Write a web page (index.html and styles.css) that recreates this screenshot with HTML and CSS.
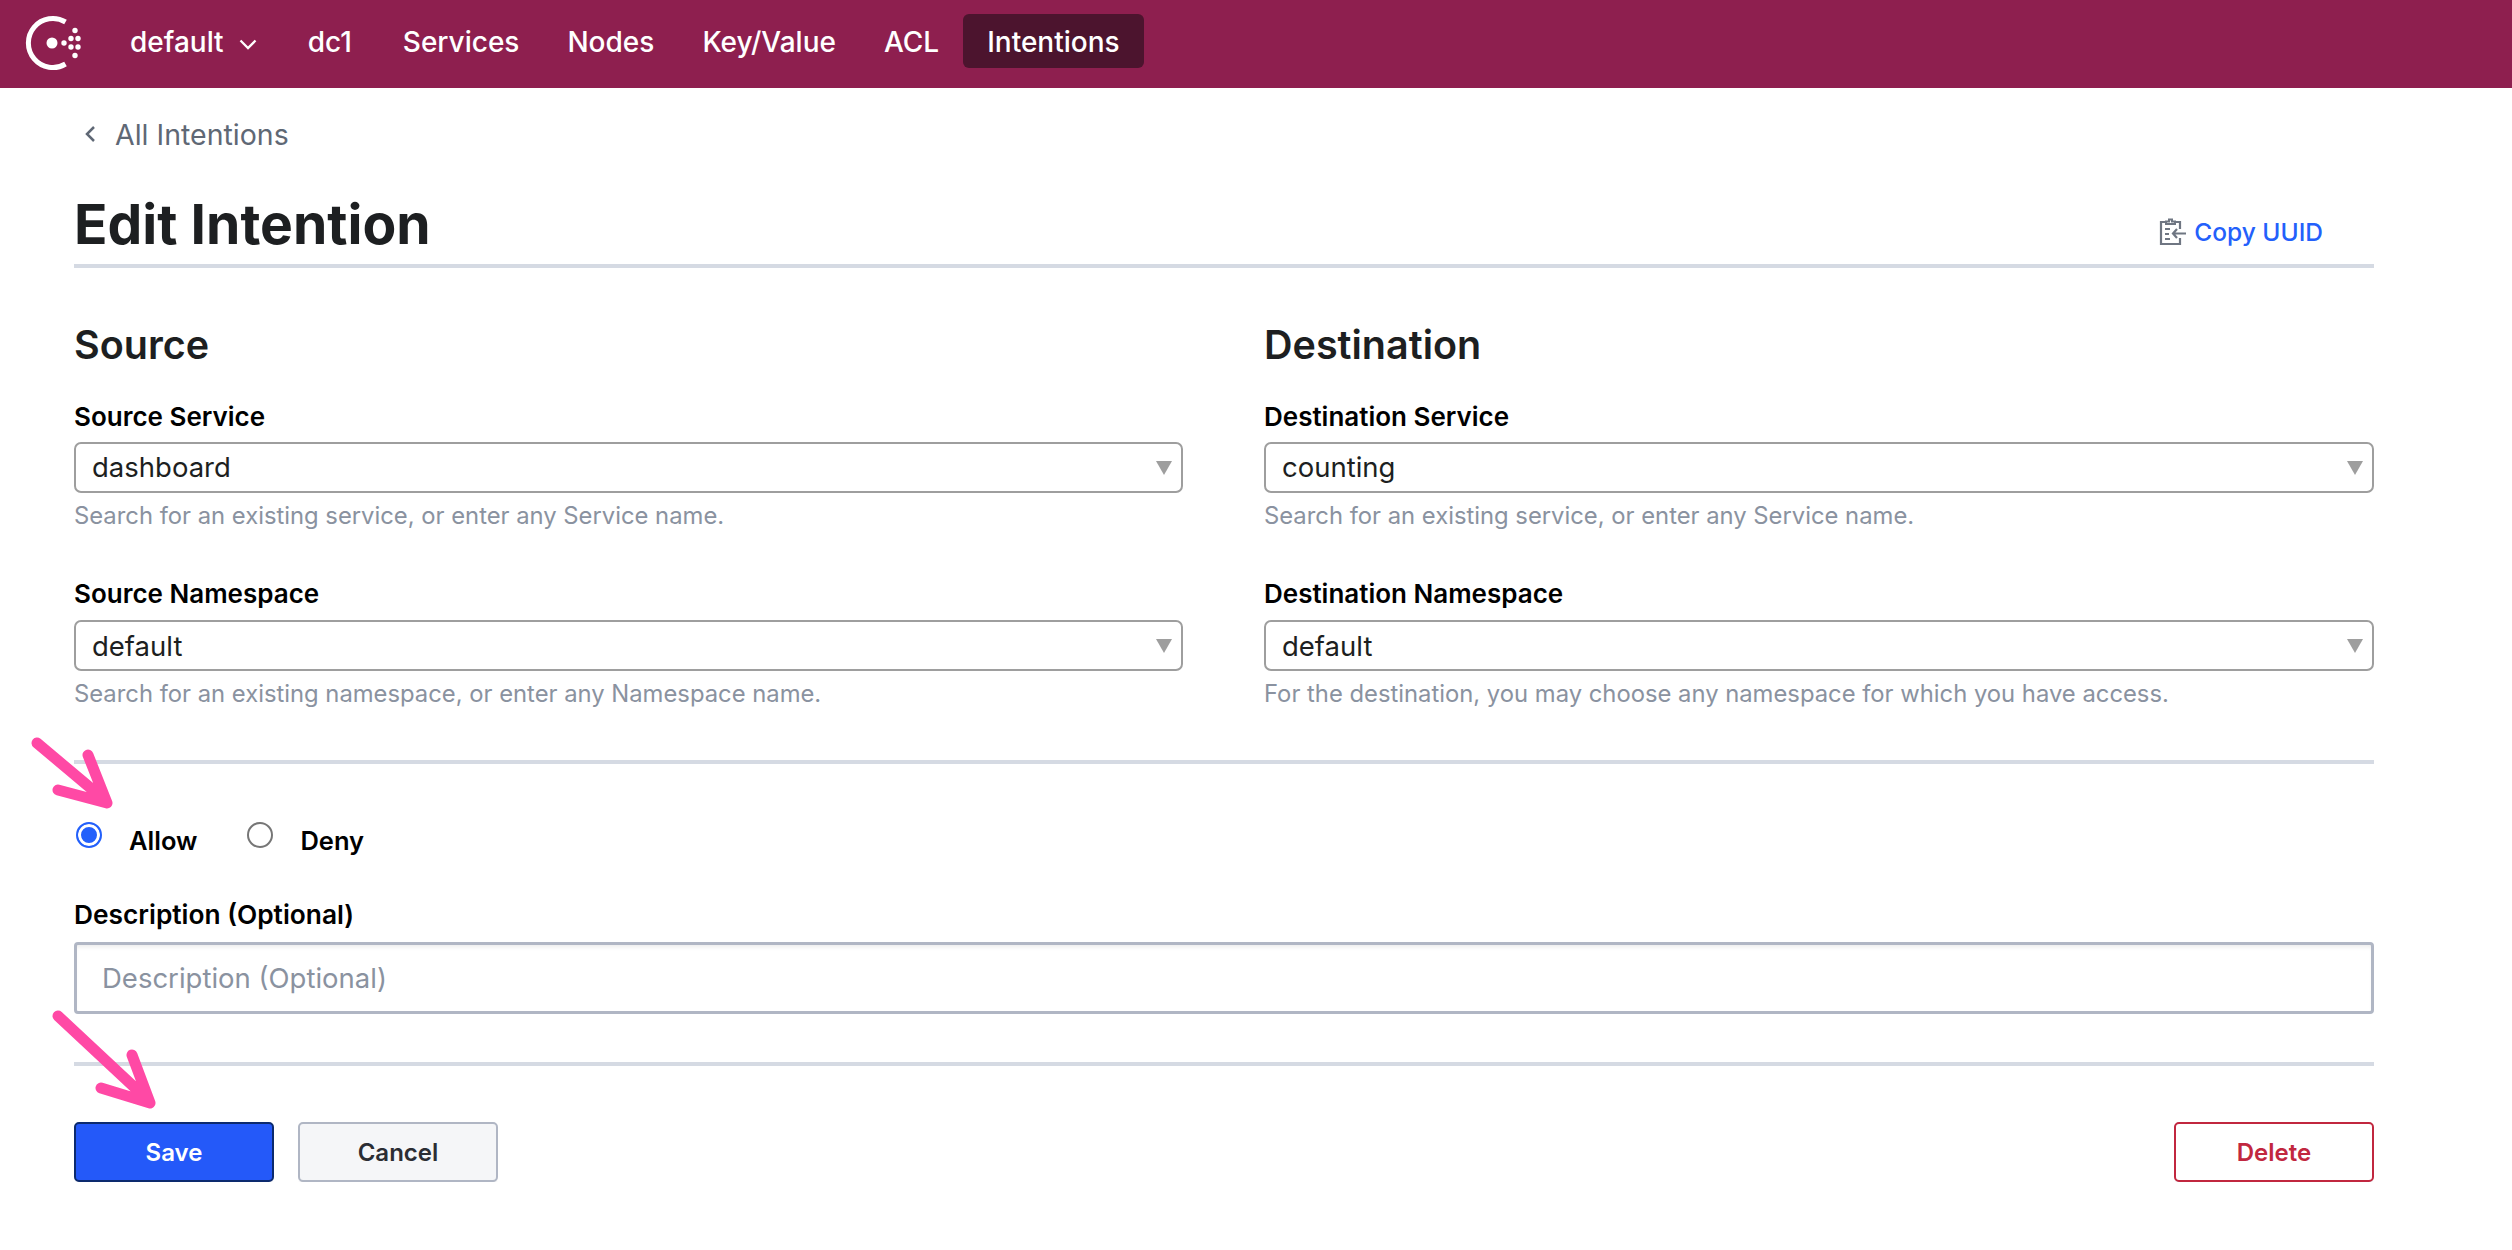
FILE: index.html
```html
<!DOCTYPE html>
<html lang="en">
<head>
    <meta charset="UTF-8">
    <title>Edit Intention</title>
    <link rel="stylesheet" href="styles.css">
</head>
<body>
    <header class="topbar">
        <svg class="logo" viewBox="0 0 56 54" width="56" height="54">
            <path d="M39.500 6 A24.500 24.500 0 1 0 39.500 48" fill="none" stroke="#fff" stroke-width="5"/>
            <circle cx="26" cy="27" r="5.500" fill="#fff"/>
            <circle cx="38" cy="27" r="2.700" fill="#fff"/>
            <circle cx="49" cy="14.500" r="2.700" fill="#fff"/>
            <circle cx="45" cy="22.500" r="2.700" fill="#fff"/>
            <circle cx="52" cy="22.500" r="2.700" fill="#fff"/>
            <circle cx="45" cy="31" r="2.700" fill="#fff"/>
            <circle cx="52" cy="31" r="2.700" fill="#fff"/>
            <circle cx="49" cy="39.500" r="2.700" fill="#fff"/>
        </svg>
        <nav class="nav">
            <a class="nav-item nav-dropdown">default
                <svg viewBox="0 0 18 11" width="18" height="11"><path d="M1.500 1.500 L9 9 L16.500 1.500" fill="none" stroke="#fff" stroke-width="2.300"/></svg>
            </a>
            <a class="nav-item nav-dc">dc1</a>
            <a class="nav-item">Services</a>
            <a class="nav-item">Nodes</a>
            <a class="nav-item">Key/Value</a>
            <a class="nav-item">ACL</a>
            <a class="nav-item active">Intentions</a>
        </nav>
    </header>

    <main class="content">
        <a class="back">
            <svg viewBox="0 0 12 18" width="12" height="18"><path d="M10 2 L3 9 L10 16" fill="none" stroke="#5f6875" stroke-width="2.500"/></svg>
            All Intentions
        </a>

        <div class="title-row">
            <h1>Edit Intention</h1>
            <a class="copy">
                <svg viewBox="0 0 28 28" width="28" height="28">
                    <path d="M7 4 H2 V26 H21 V20 M21 11 V4 H16" fill="none" stroke="#6f7682" stroke-width="2.200"/>
                    <path d="M7 6 V3.500 H10 V1.500 H13 V3.500 H16 V6 Z" fill="none" stroke="#6f7682" stroke-width="2"/>
                    <path d="M6 11 H11 M6 16 H10 M6 21 H11 M27 15.500 H14 M18 11 L14 15.500 L18 20" fill="none" stroke="#6f7682" stroke-width="2.200"/>
                </svg>
                Copy UUID
            </a>
        </div>

        <div class="columns">
            <section>
                <h2>Source</h2>
                <label class="label">Source Service</label>
                <div class="select">dashboard<span class="caret"></span></div>
                <p class="hint">Search for an existing service, or enter any Service name.</p>
                <label class="label label-next">Source Namespace</label>
                <div class="select select-next">default<span class="caret"></span></div>
                <p class="hint">Search for an existing namespace, or enter any Namespace name.</p>
            </section>
            <section>
                <h2>Destination</h2>
                <label class="label">Destination Service</label>
                <div class="select">counting<span class="caret"></span></div>
                <p class="hint">Search for an existing service, or enter any Service name.</p>
                <label class="label label-next">Destination Namespace</label>
                <div class="select select-next">default<span class="caret"></span></div>
                <p class="hint">For the destination, you may choose any namespace for which you have access.</p>
            </section>
        </div>

        <hr class="divider divider-mid">

        <div class="radios">
            <label class="radio"><span class="dot checked"></span>Allow</label>
            <label class="radio"><span class="dot"></span>Deny</label>
        </div>

        <label class="label label-desc">Description (Optional)</label>
        <input class="desc" type="text" placeholder="Description (Optional)">

        <hr class="divider divider-low">

        <div class="actions">
            <button class="btn btn-save">Save</button>
            <button class="btn btn-cancel">Cancel</button>
            <button class="btn btn-delete">Delete</button>
        </div>
    </main>

    <svg class="arrows" viewBox="0 0 2512 1250" width="2512" height="1250">
        <path d="M37 743 L106 801 M88 755 L107 803 L58 790" fill="none" stroke="#ff49a5" stroke-width="11" stroke-linecap="round" stroke-linejoin="round"/>
        <path d="M58 1016 L148 1100 M132 1055 L150 1103 L101 1088" fill="none" stroke="#ff49a5" stroke-width="11" stroke-linecap="round" stroke-linejoin="round"/>
    </svg>
</body>
</html>
```

FILE: styles.css
```css
* {
    box-sizing: border-box;
}

body {
    margin: 0;
    background-color: #fff;
    font-family: Inter, "Liberation Sans", sans-serif;
    color: #000;
}

.topbar {
    display: flex;
    align-items: center;
    height: 88px;
    background-color: #8e1f4f;
    padding-left: 26px;
}

.logo {
    overflow: visible;
    margin: -2px 48px 0 0;
}

.nav {
    display: flex;
    align-items: center;
    color: #fff;
    font-size: 28px;
    font-weight: 500;
}

.nav-item {
    display: flex;
    align-items: center;
    height: 54px;
    padding: 2px 24px 0;
    border-radius: 6px;
    margin-top: -6px;
}

.nav-dropdown {
    gap: 15px;
    padding-left: 0;
    margin-right: 3px;
}

.nav-dropdown svg {
    margin-top: 4px;
}

.nav-dc {
    margin-right: 3px;
}

.nav-item.active {
    background-color: #4c142e;
}

.content {
    position: relative;
    width: 2374px;
    padding-left: 74px;
}

.back {
    display: flex;
    align-items: center;
    gap: 19px;
    margin: 30px 0 0 10px;
    height: 32px;
    color: #5f6875;
    font-size: 28.500px;
}

.title-row {
    display: flex;
    justify-content: space-between;
    align-items: flex-end;
    height: 100px;
    padding: 0 51px 14px 0;
    border-bottom: 4px solid #d5dae3;
    margin-top: 18px;
}

h1 {
    margin: 0 0 -9px;
    font-size: 55.200px;
    line-height: 70px;
    font-weight: 700;
    color: #1d1f21;
}

.copy {
    display: flex;
    align-items: center;
    gap: 7px;
    margin-bottom: 3px;
    color: #2360fb;
    font-size: 24.500px;
    font-weight: 500;
}

.columns {
    display: grid;
    grid-template-columns: 1109px 1110px;
    column-gap: 81px;
}

h2 {
    margin: 52px 0 0;
    font-size: 39.500px;
    line-height: 50px;
    font-weight: 600;
    color: #1d1f21;
}

.label {
    display: block;
    font-size: 26px;
    line-height: 32px;
    font-weight: 600;
}

.columns .label {
    margin-top: 31px;
}

.columns .label-next {
    margin-top: 47px;
}

.select {
    position: relative;
    height: 51px;
    margin-top: 9px;
    padding-left: 16px;
    border: 2.500px solid #9e9e9e;
    border-radius: 7px;
    font-size: 27.500px;
    line-height: 47px;
    color: #1d1f21;
}

.select-next {
    margin-top: 10px;
    line-height: 48px;
}

.caret {
    position: absolute;
    right: 9px;
    top: 17px;
    border-left: 8px solid transparent;
    border-right: 8px solid transparent;
    border-top: 14px solid #9e9e9e;
}

.hint {
    margin: 8px 0 0;
    font-size: 23.800px;
    line-height: 30px;
    color: #8a92a0;
}

.divider {
    height: 4px;
    margin: 0;
    border: none;
    background-color: #d5dae3;
}

.divider-mid {
    margin-top: 51px;
}

.radios {
    display: flex;
    gap: 50px;
    margin-top: 58px;
    padding-left: 2px;
}

.radio {
    display: flex;
    align-items: center;
    gap: 27px;
    height: 36px;
    font-size: 25.500px;
    font-weight: 600;
}

.dot {
    width: 26px;
    height: 26px;
    margin-top: -10px;
    border: 2px solid #767676;
    border-radius: 50%;
}

.dot.checked {
    border-color: #2360fb;
    background-color: #2360fb;
    box-shadow: inset 0 0 0 3px #fff;
}

.label-desc {
    margin-top: 41px;
    font-size: 26.300px;
}

.desc {
    display: block;
    width: 100%;
    height: 72px;
    margin-top: 11px;
    padding: 0 25px;
    border: 3px solid #b0b6c4;
    border-radius: 4px;
    outline: none;
    box-shadow: inset 0 4px 4px -2px rgba(0, 0, 0, 0.08);
    font-family: inherit;
    font-size: 27.500px;
}

.desc::placeholder {
    color: #8a92a0;
}

.divider-low {
    margin-top: 48px;
}

.actions {
    display: flex;
    gap: 24px;
    margin-top: 56px;
}

.btn {
    width: 200px;
    height: 60px;
    border-radius: 5px;
    font-family: inherit;
    font-size: 24px;
    font-weight: 600;
    box-shadow: 0 8px 3px -3px rgba(40, 50, 70, 0.28);
}

.btn-save {
    background-color: #2459f9;
    border: 2px solid #0c2a6e;
    color: #fff;
}

.btn-cancel {
    background-color: #f5f6f8;
    border: 2.500px solid #b0b6c4;
    color: #2b2d33;
}

.btn-delete {
    margin-left: auto;
    background-color: #fff;
    border: 2.500px solid #c1273f;
    color: #c1273f;
}

.arrows {
    position: absolute;
    left: 0;
    top: 0;
    pointer-events: none;
}
```
